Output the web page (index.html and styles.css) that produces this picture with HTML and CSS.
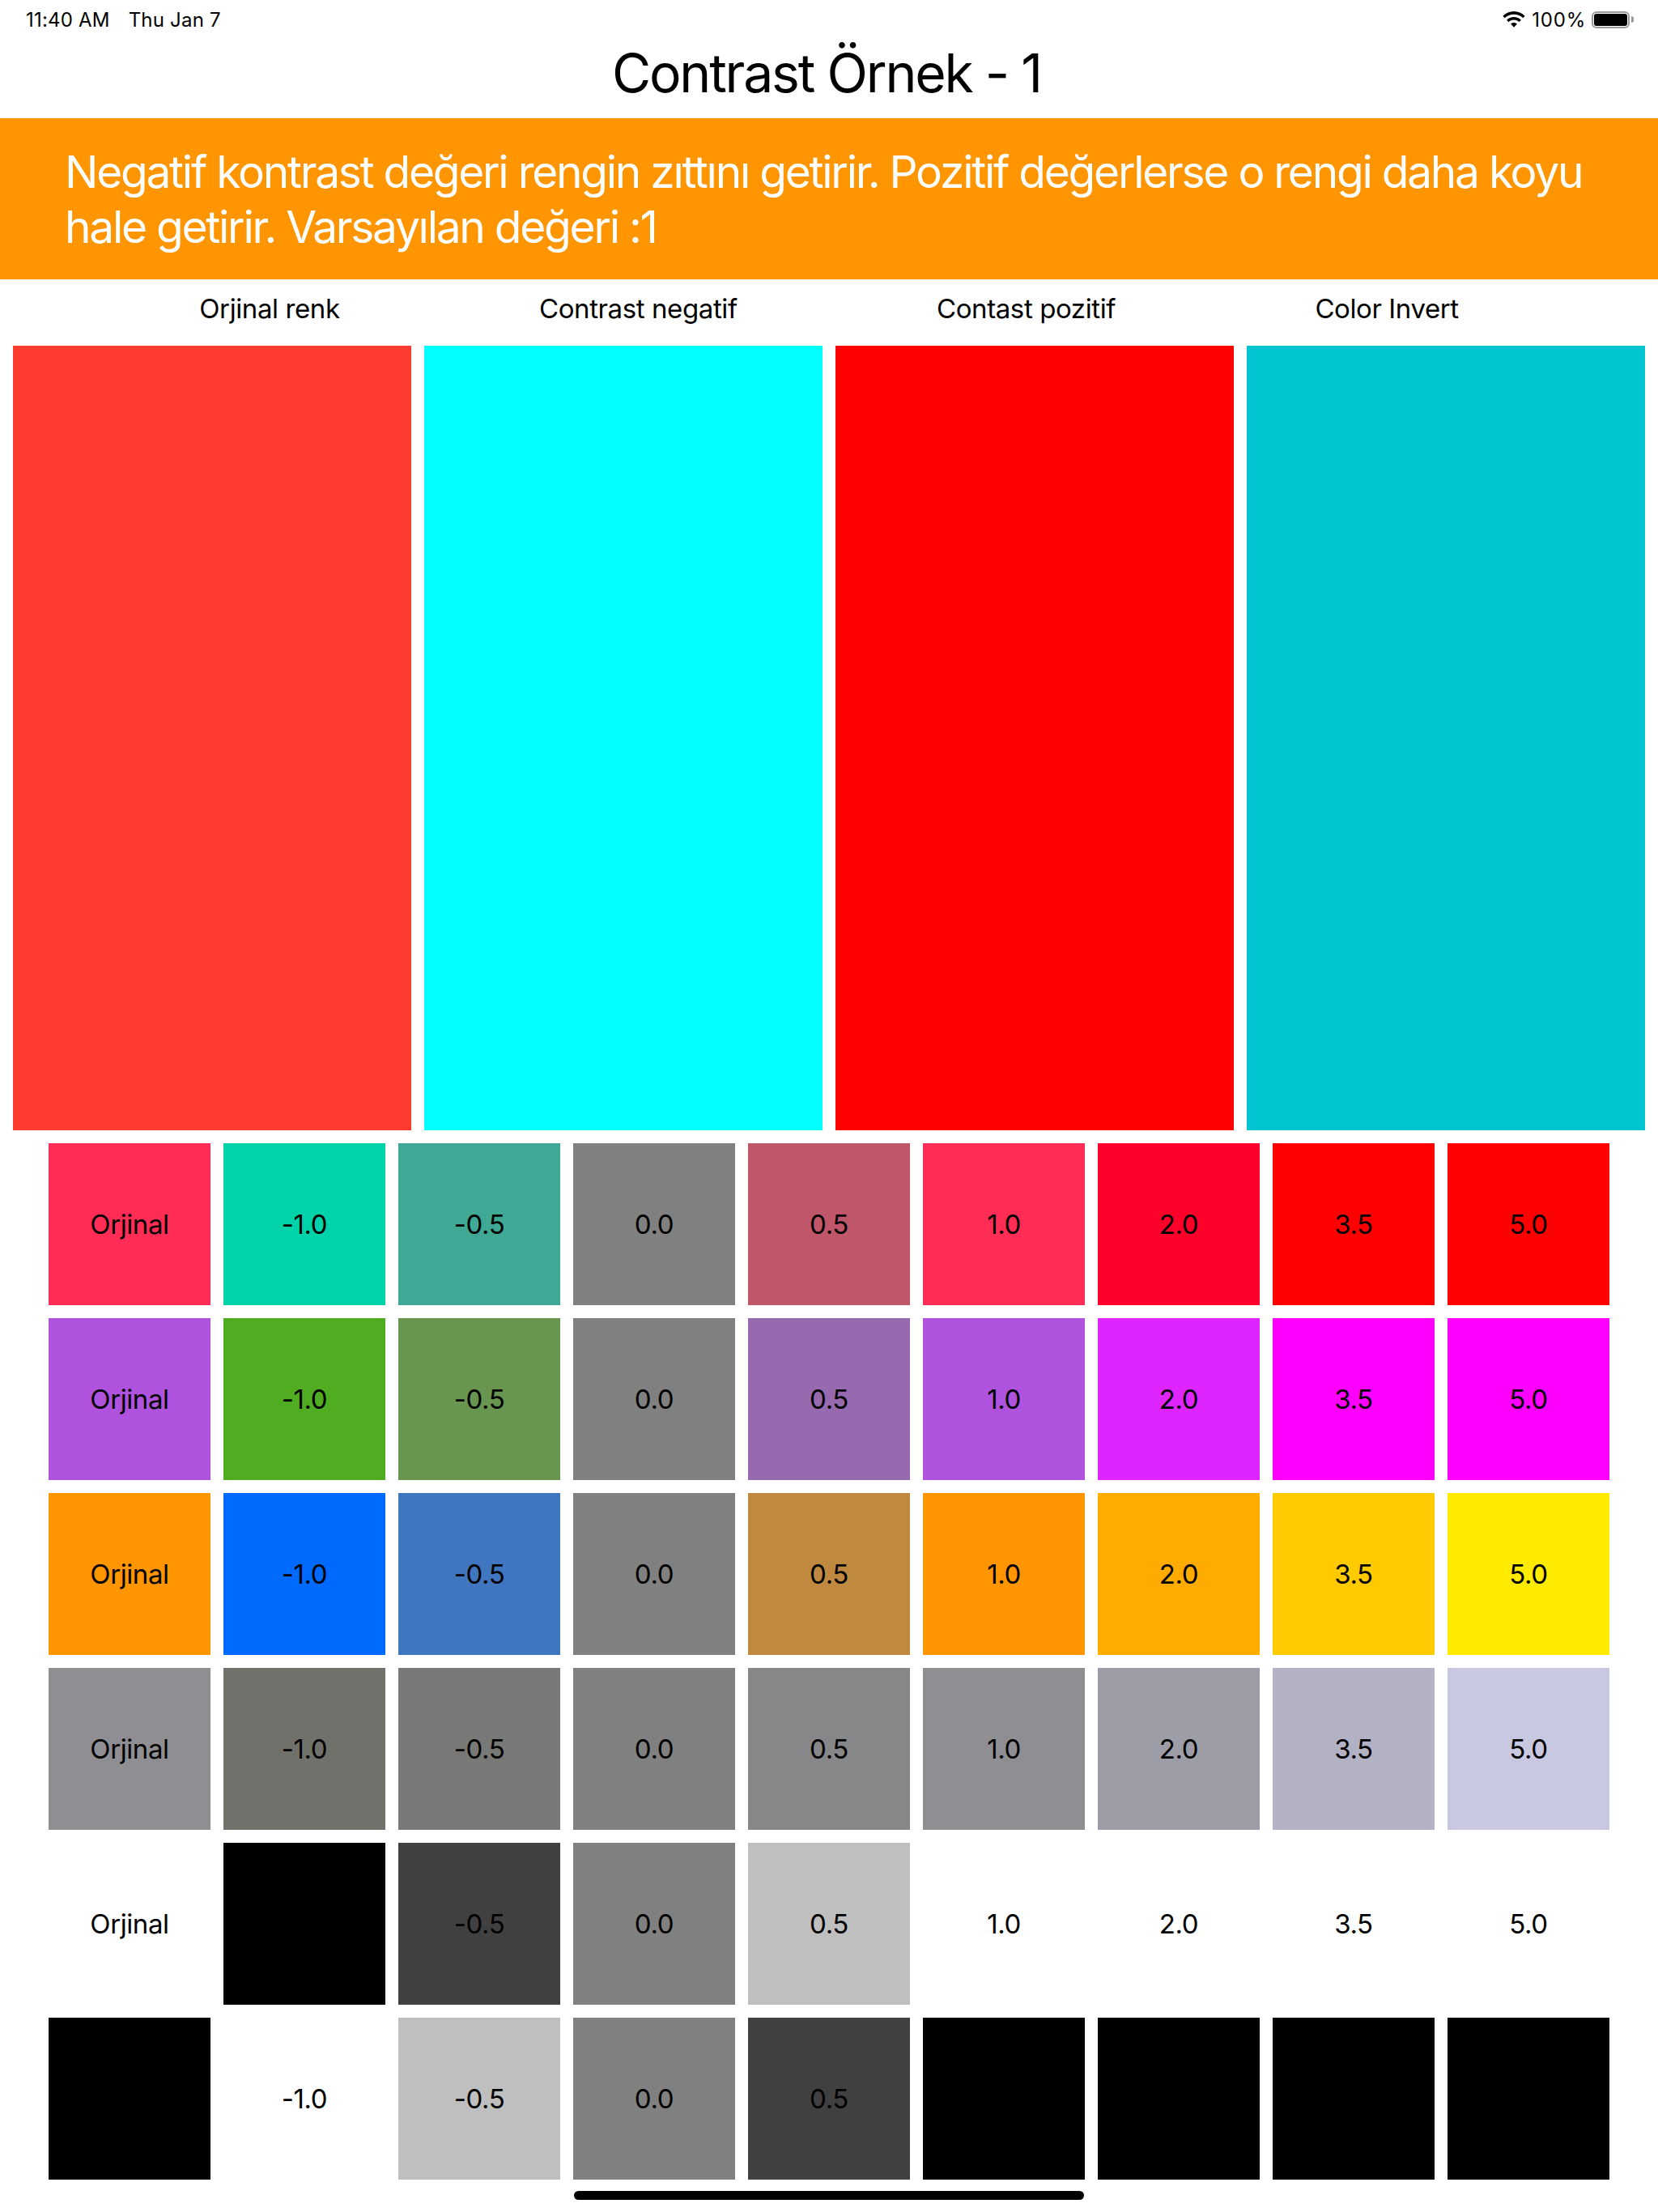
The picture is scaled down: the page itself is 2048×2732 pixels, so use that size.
FILE: index.html
```html
<!DOCTYPE html>
<html lang="tr">
<head>
  <meta charset="UTF-8" />
  <meta name="viewport" content="width=device-width, initial-scale=1.0"/>
  <title>Contrast Örnek - 1</title>
  <link rel="stylesheet" href="styles.css">
</head>
<body>
  <div class="status-bar">
    <div class="status-left">
      <span>11:40 AM</span>
      <span>Thu Jan 7</span>
    </div>
    <div class="status-right">
      <svg class="wifi" width="28" height="20" viewBox="2 1 24 17">
        <path d="M14 4.200c3.700 0 7.100 1.400 9.700 3.800l2-2.100C22.500 2.900 18.400 1 14 1S5.500 2.900 2.300 5.900l2 2.100C6.900 5.600 10.300 4.200 14 4.200z"/>
        <path d="M14 10c2.100 0 4.100.8 5.600 2.200l2-2.100C19.600 8.200 16.900 7 14 7s-5.600 1.200-7.600 3.100l2 2.100C9.900 10.800 11.900 10 14 10z"/>
        <path d="M14 12.900c-1.300 0-2.500.5-3.400 1.300l3.400 3.700 3.400-3.700c-.9-.8-2.100-1.300-3.400-1.300z"/>
      </svg>
      <span class="battery-text">100%</span>
      <div class="battery"><div class="battery-fill"></div></div>
      <div class="battery-nub"></div>
    </div>
  </div>

  <h1 class="title">Contrast Örnek - 1</h1>

  <p class="banner">Negatif kontrast değeri rengin zıttını getirir. Pozitif değerlerse o rengi daha koyu hale getirir. Varsayılan değeri :1</p>

  <div class="labels">
    <span>Orjinal renk</span>
    <span>Contrast negatif</span>
    <span>Contast pozitif</span>
    <span>Color Invert</span>
  </div>

  <div class="swatches">
    <div class="swatch swatch-original"></div>
    <div class="swatch swatch-negative"></div>
    <div class="swatch swatch-positive"></div>
    <div class="swatch swatch-invert"></div>
  </div>

  <div class="grid" id="grid"></div>

  <div class="home-indicator"></div>

  <script>
    const baseColors = [
      [255, 45, 85],
      [175, 82, 222],
      [255, 149, 0],
      [142, 142, 147],
      [255, 255, 255],
      [0, 0, 0]
    ];
    const contrastValues = [-1, -0.5, 0, 0.5, 1, 2, 3.5, 5];
    const grid = document.getElementById("grid");

    // contrast pivots around mid grey
    function applyContrast(channel, value) {
      const result = (channel - 127.5) * value + 127.5;
      return Math.round(Math.min(255, Math.max(0, result)));
    }

    function addCell(text, color) {
      const cell = document.createElement("div");
      cell.className = "cell";
      cell.textContent = text;
      cell.style.backgroundColor = `rgb(${color.join(",")})`;
      grid.appendChild(cell);
    }

    baseColors.forEach(color => {
      addCell("Orjinal", color);
      contrastValues.forEach(value => {
        addCell(value.toFixed(1), color.map(channel => applyContrast(channel, value)));
      });
    });
  </script>
</body>
</html>
```

FILE: styles.css
```css
body {
    font-family: Inter, 'Noto Sans', sans-serif;
    background-color: #fff;
    color: #000;
    margin: 0;
    padding: 0;
    overflow: hidden;
}
.status-bar {
    height: 48px;
    display: flex;
    justify-content: space-between;
    align-items: center;
    padding: 0 30px 0 32px;
    font-size: 24px;
}
.status-left {
    display: flex;
    gap: 23px;
    letter-spacing: 0.2px;
}
.status-right {
    display: flex;
    align-items: center;
}
.wifi {
    margin-right: 8px;
}
.battery-text {
    margin-right: 7px;
    letter-spacing: 0.8px;
}
.battery {
    width: 47px;
    height: 21px;
    box-sizing: border-box;
    border: 2px solid #9a9a9a;
    border-radius: 6px;
    padding: 1px;
}
.battery-fill {
    height: 100%;
    background-color: #000;
    border-radius: 3px;
}
.battery-nub {
    width: 3px;
    height: 8px;
    margin-left: 2px;
    background-color: #9a9a9a;
    border-radius: 0 4px 4px 0;
}
.title {
    height: 98px;
    margin: 0;
    padding-right: 6px;
    font-size: 66px;
    font-weight: 400;
    letter-spacing: -2.2px;
    line-height: 84px;
    text-align: center;
}
.banner {
    height: 199px;
    box-sizing: border-box;
    margin: 0;
    padding: 32px 40px 0 80px;
    background-color: #ff9500;
    color: #fff;
    font-size: 55px;
    letter-spacing: -2.25px;
    line-height: 68px;
}
.labels {
    height: 82px;
    display: flex;
    justify-content: space-evenly;
    padding-top: 16px;
    box-sizing: border-box;
    font-size: 33px;
    letter-spacing: -0.4px;
    line-height: 41px;
}
.swatches {
    display: flex;
    gap: 16px;
    padding: 0 16px;
}
.swatch {
    flex: 1;
    height: 969px;
}
.swatch-original {
    background-color: #ff3b30;
}
.swatch-negative {
    background-color: #00ffff;
}
.swatch-positive {
    background-color: #ff0000;
}
.swatch-invert {
    background-color: #00c4cf;
}
.grid {
    display: grid;
    grid-template-columns: repeat(9, 200px);
    grid-auto-rows: 200px;
    gap: 16px;
    justify-content: center;
    margin-top: 16px;
}
.cell {
    display: flex;
    justify-content: center;
    align-items: center;
    font-size: 33px;
    letter-spacing: -0.4px;
}
.home-indicator {
    width: 630px;
    height: 11px;
    margin: 14px auto 0;
    background-color: #000;
    border-radius: 6px;
}
```
